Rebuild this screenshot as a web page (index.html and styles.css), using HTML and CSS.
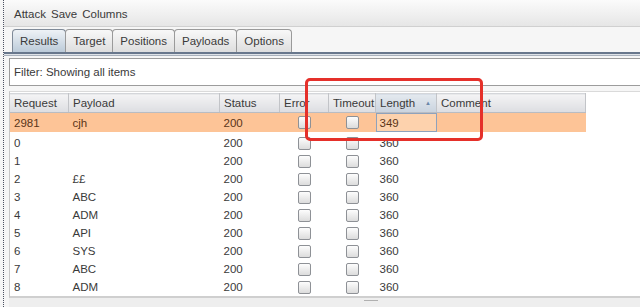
FILE: index.html
```html
<!DOCTYPE html>
<html lang="en">
<head>
    <meta charset="UTF-8">
    <title>Intruder attack</title>
    <link rel="stylesheet" href="styles.css">
</head>
<body>
<div class="frame">
    <div class="menubar">
        <span>Attack</span><span>Save</span><span>Columns</span>
    </div>

    <div class="tabs">
        <div class="tab active">Results</div>
        <div class="tab">Target</div>
        <div class="tab">Positions</div>
        <div class="tab">Payloads</div>
        <div class="tab">Options</div>
    </div>
    <div class="tabline"></div>

    <div class="filter">Filter: Showing all items</div>

    <div class="panel">
        <table id="results">
            <tr class="head">
                <td class="c-req">Request</td>
                <td class="c-pay">Payload</td>
                <td class="c-st">Status</td>
                <td class="c-err">Error</td>
                <td class="c-to">Timeout</td>
                <td class="c-len sorted">Length<span class="arrow">&#9650;</span></td>
                <td class="c-com">Comment</td>
            </tr>
            <tr class="sel">
                <td>2981</td><td>cjh</td><td>200</td>
                <td class="box"><i class="cb"></i></td><td class="box"><i class="cb"></i></td>
                <td class="focus">349</td><td></td>
            </tr>
            <tr><td>0</td><td></td><td>200</td><td class="box"><i class="cb"></i></td><td class="box"><i class="cb"></i></td><td>360</td><td></td></tr>
            <tr><td>1</td><td></td><td>200</td><td class="box"><i class="cb"></i></td><td class="box"><i class="cb"></i></td><td>360</td><td></td></tr>
            <tr><td>2</td><td>&pound;&pound;</td><td>200</td><td class="box"><i class="cb"></i></td><td class="box"><i class="cb"></i></td><td>360</td><td></td></tr>
            <tr><td>3</td><td>ABC</td><td>200</td><td class="box"><i class="cb"></i></td><td class="box"><i class="cb"></i></td><td>360</td><td></td></tr>
            <tr><td>4</td><td>ADM</td><td>200</td><td class="box"><i class="cb"></i></td><td class="box"><i class="cb"></i></td><td>360</td><td></td></tr>
            <tr><td>5</td><td>API</td><td>200</td><td class="box"><i class="cb"></i></td><td class="box"><i class="cb"></i></td><td>360</td><td></td></tr>
            <tr><td>6</td><td>SYS</td><td>200</td><td class="box"><i class="cb"></i></td><td class="box"><i class="cb"></i></td><td>360</td><td></td></tr>
            <tr><td>7</td><td>ABC</td><td>200</td><td class="box"><i class="cb"></i></td><td class="box"><i class="cb"></i></td><td>360</td><td></td></tr>
            <tr><td>8</td><td>ADM</td><td>200</td><td class="box"><i class="cb"></i></td><td class="box"><i class="cb"></i></td><td>360</td><td></td></tr>
        </table>
    </div>

    <div class="bottombar"><span class="grip"></span></div>

    <!-- annotation drawn over the screenshot -->
    <div class="mark"></div>
</div>
</body>
</html>
```

FILE: styles.css
```css
html, body {
    margin: 0;
    padding: 0;
}
body {
    width: 640px;
    height: 307px;
    overflow: hidden;
    background: #f6f6f6;
    font: 11.5px "Liberation Sans", Arial, sans-serif;
    color: #3a3a3a;
}
.frame {
    position: relative;
    height: 307px;
    margin-left: 3px;
    border-left: 1px dotted #4a5060;
    display: flex;
    flex-direction: column;
}
.menubar {
    box-sizing: border-box;
    height: 27px;
    border-bottom: 1px solid #d0d0d0;
    background: linear-gradient(#fbfbfb, #e6e6e6);
    padding: 2px 0 0 10px;
    display: flex;
    gap: 5px;
    align-items: center;
}
.tabs {
    display: flex;
    margin-top: 2px;
    padding-left: 8px;
    height: 23px;
}
.tab {
    border: 1px solid #9a9a9a;
    border-bottom: none;
    border-radius: 4px 4px 0 0;
    background: linear-gradient(#f8f8f8, #dedede);
    padding: 0 7px;
    line-height: 23px;
    margin-right: -1px;
}
.tab.active {
    background: linear-gradient(#eef2f6, #bccbd9);
    border-color: #7f8a98;
}
.tabline {
    height: 1px;
    border-top: 2px solid #68778c;
    border-bottom: 1px solid #a9b1bc;
    background: #dfe3e8;
}
.filter {
    margin: 2px 0 0 5px;
    height: 26px;
    line-height: 26px;
    border: 1px solid #9c9c9c;
    border-right: none;
    background: #fff;
    padding-left: 4px;
}
.panel {
    margin: 5px 0 0 5px;
    height: 207px;
    border-left: 1px solid #c8c8c8;
    border-top: 1px solid #dadada;
    border-bottom: 2px solid #cfcfcf;
    background: #fff;
    padding-top: 1px;
    box-sizing: border-box;
    overflow: hidden;
}
#results {
    border-collapse: collapse;
    table-layout: fixed;
    width: 575px;
}
#results td {
    height: 18px;
    padding: 0 0 0 4px;
    white-space: nowrap;
    overflow: hidden;
}
#results tr.head td {
    height: 18px;
    background: linear-gradient(#f4f4f5, #dcdde1);
    border-right: 1px solid #c2c4c8;
    border-bottom: 1px solid #b9bcc2;
    border-top: 1px solid #d4d6da;
}
#results tr.head td.sorted {
    background: linear-gradient(#e4e9ef, #c9d3de);
    position: relative;
}
.arrow {
    position: absolute;
    right: 5px;
    top: 6px;
    font-size: 6px;
    color: #6b86a8;
}
.c-req { width: 54px; }
.c-pay { width: 146px; }
.c-st  { width: 55px; }
.c-err { width: 44px; }
.c-to  { width: 42px; }
.c-len { width: 56px; }
.c-com { width: 144px; }

#results td.box {
    text-align: center;
    padding: 0;
}
#results tr td.box:nth-child(4) {
    padding-left: 1px;
}
.cb {
    display: inline-block;
    width: 11px;
    height: 11px;
    border: 1px solid #8e9196;
    border-radius: 2px;
    background: linear-gradient(#fdfdfd, #dcdcdc);
    vertical-align: middle;
}
#results tr.sel td {
    height: 19px;
    background: #fdc497;
    color: #5a3518;
}
#results tr.sel td.focus {
    background: #fdd2ad;
    outline: 1px solid #8ea2bc;
    outline-offset: -1px;
}
#results tr.sel + tr td {
    padding-top: 2px;
}
.bottombar {
    flex: 1;
    margin-left: 5px;
    background: #eeeeee;
    position: relative;
}
.grip {
    position: absolute;
    left: 355px;
    top: 2px;
    width: 14px;
    height: 1px;
    background: #b0b0b0;
}
.mark {
    position: absolute;
    left: 301px;
    top: 78px;
    width: 172px;
    height: 57px;
    border: 3px solid #e5302a;
    border-radius: 5px;
}
```
